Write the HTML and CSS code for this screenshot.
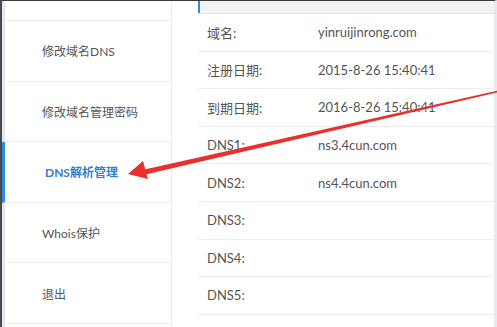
FILE: index.html
```html
<!DOCTYPE html>
<html lang="zh-CN">
<head>
<meta charset="utf-8">
<title>域名管理</title>
<link rel="stylesheet" href="styles.css">
</head>
<body>
<div class="frame">
  <aside class="sidebar">
    <div class="nav-item nav-top"></div>
    <div class="nav-item">修改域名DNS</div>
    <div class="nav-item">修改域名管理密码</div>
    <div class="nav-item active">DNS解析管理</div>
    <div class="nav-item">Whois保护</div>
    <div class="nav-item">退出</div>
  </aside>
  <main class="content">
    <div class="tabbar"><span class="tab-mark"></span></div>
    <div class="row"><span class="label">域名:</span><span class="value">yinruijinrong.com</span></div>
    <div class="row"><span class="label">注册日期:</span><span class="value">2015-8-26 15:40:41</span></div>
    <div class="row"><span class="label">到期日期:</span><span class="value">2016-8-26 15:40:41</span></div>
    <div class="row"><span class="label">DNS1:</span><span class="value">ns3.4cun.com</span></div>
    <div class="row"><span class="label">DNS2:</span><span class="value">ns4.4cun.com</span></div>
    <div class="row"><span class="label">DNS3:</span><span class="value"></span></div>
    <div class="row"><span class="label">DNS4:</span><span class="value"></span></div>
    <div class="row"><span class="label">DNS5:</span><span class="value"></span></div>
    <div class="row row-last"></div>
  </main>
</div>
<svg class="arrow" width="497" height="327" viewBox="0 0 497 327">
  <polygon points="144.5,169.5 497,90.8 497,92.6 145.5,174.5" fill="#e8312c"/>
  <polygon points="128,174 143,161 148,179" fill="#e8312c"/>
</svg>
</body>
</html>
```

FILE: styles.css
```css
html, body {
  margin: 0;
  padding: 0;
  background: #ffffff;
}
body {
  width: 497px;
  height: 327px;
  overflow: hidden;
  position: relative;
  font-family: Lato, "Noto Sans CJK SC", sans-serif;
  color: #555;
}
.frame {
  display: flex;
  height: 327px;
  overflow: hidden;
  box-sizing: border-box;
  border-top: 1px solid #3a3a3a;
  border-left: 2px solid #4a4a4a;
  border-right: 3px solid #e9eaee;
}
.sidebar {
  width: 166px;
  flex: none;
  border-left: 3px solid #e7e9ef;
  border-right: 1px solid #ececec;
  display: flex;
  flex-direction: column;
}
.nav-item {
  height: 60.6px;
  flex: none;
  box-sizing: border-box;
  border-bottom: 1px solid #efefef;
  display: flex;
  align-items: center;
  padding-left: 37px;
  font-size: 12px;
  color: #555;
}
.nav-top {
  height: 20px;
}
.nav-item.active {
  border-left: 3px solid #2d8be0;
  margin-left: -3px;
  padding-left: 40px;
  color: #2f80d1;
  font-weight: bold;
}
.content {
  flex: 1;
  margin-left: 26px;
  display: flex;
  flex-direction: column;
  overflow: hidden;
}
.tabbar {
  height: 12px;
  flex: none;
  background: #f2f3f7;
  border-bottom: 1px solid #e8e9ee;
}
.tab-mark {
  display: block;
  width: 2px;
  height: 12px;
  background: #2d8be0;
}
.row {
  height: 37.6px;
  flex: none;
  box-sizing: border-box;
  border-bottom: 1px solid #ededed;
  display: flex;
  align-items: center;
  padding-left: 9px;
  font-size: 13px;
  color: #555;
}
.row-last {
  flex: 1;
  height: auto;
  border-bottom: none;
}
.label {
  width: 111px;
  flex: none;
}
.value {
  color: #555;
}
.arrow {
  position: absolute;
  left: 0;
  top: 0;
  pointer-events: none;
}
```
